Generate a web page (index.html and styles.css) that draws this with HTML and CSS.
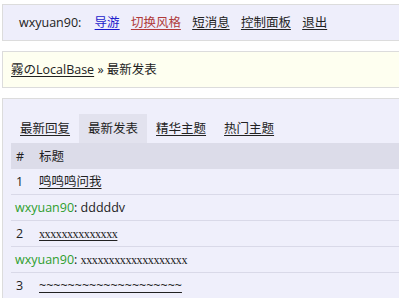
FILE: index.html
```html
<!DOCTYPE html>
<html lang="zh-CN">
  <head>
    <meta charset="UTF-8" />
    <title>最新发表 - 霧のLocalBase</title>
    <meta name="viewport" content="width=device-width, initial-scale=1.0" />
    <link rel="stylesheet" href="styles.css">
  </head>
  <body>
    <div class="box userbar">
      <span class="uname">wxyuan90:</span>
      <a href="#" class="nav-guide">导游</a>
      <a href="#" class="nav-style">切换风格</a>
      <a href="#">短消息</a>
      <a href="#">控制面板</a>
      <a href="#" class="nav-exit">退出</a>
    </div>

    <div class="box crumbs">
      <a href="#">霧のLocalBase</a> <span class="sep">&raquo;</span> 最新发表
    </div>

    <div class="box main">
      <ul class="tabs">
        <li><a href="#">最新回复</a></li>
        <li class="current">最新发表</li>
        <li><a href="#">精华主题</a></li>
        <li><a href="#">热门主题</a></li>
      </ul>

      <table class="threads">
        <thead>
          <tr>
            <th class="num">#</th>
            <th>标题</th>
          </tr>
        </thead>
        <tbody>
          <tr>
            <td class="num">1</td>
            <td><a href="#">鸣鸣鸣问我</a></td>
          </tr>
          <tr>
            <td colspan="2"><span class="author">wxyuan90</span>: dddddv</td>
          </tr>
          <tr>
            <td class="num">2</td>
            <td><a href="#" class="narrow">xxxxxxxxxxxxxx</a></td>
          </tr>
          <tr>
            <td colspan="2"><span class="author">wxyuan90</span>: <span class="narrow">xxxxxxxxxxxxxxxxxxx</span></td>
          </tr>
          <tr>
            <td class="num">3</td>
            <td><a href="#">~~~~~~~~~~~~~~~~~~~~</a></td>
          </tr>
        </tbody>
      </table>
    </div>
  </body>
</html>
```

FILE: styles.css
```css
html,
body {
  overflow: hidden;
}

body {
  margin: 0;
  padding-top: 4px;
  background: #fff;
  color: #222;
  font-family: "Open Sans", "Noto Sans CJK SC", sans-serif;
  font-size: 12.5px;
  line-height: 19px;
}

a {
  color: #222;
  text-decoration: underline;
  text-underline-offset: 2px;
}

.box {
  margin: 0 0 10px 2px;
  border: 1px solid #dcdcdc;
  border-right: none;
}

.userbar {
  background: #eeeefb;
  padding: 8px 16px;
}

.userbar .uname {
  margin-right: 10px;
}

.userbar a {
  margin-right: 8px;
}

.userbar .nav-guide {
  color: #1a1acc;
}

.userbar .nav-style {
  color: #b03a3a;
}

.crumbs {
  background: #fefff0;
  padding: 8px 8px;
}

.main {
  background: #efeffb;
  padding: 15px 0 0 8px;
  margin-bottom: 0;
}

.tabs {
  display: flex;
  list-style: none;
  margin: 0;
  padding: 0;
}

.tabs li {
  padding: 5px 9px;
}

.tabs li.current {
  background: #e2e2ee;
}

.threads {
  width: 100%;
  border-collapse: collapse;
}

.threads th,
.threads td {
  height: 25px;
  padding: 0 4px;
  text-align: left;
  font-weight: normal;
  border-bottom: 1px solid #d9d9e8;
}

.threads th {
  background: #dcdce9;
  border-bottom: none;
  height: 26px;
}

.threads .num {
  width: 15px;
  padding-left: 5px;
}

.author {
  color: #2e9e2e;
}

.narrow {
  font-family: "Liberation Serif", serif;
  font-size: 12px;
  letter-spacing: -0.4px;
}
```
